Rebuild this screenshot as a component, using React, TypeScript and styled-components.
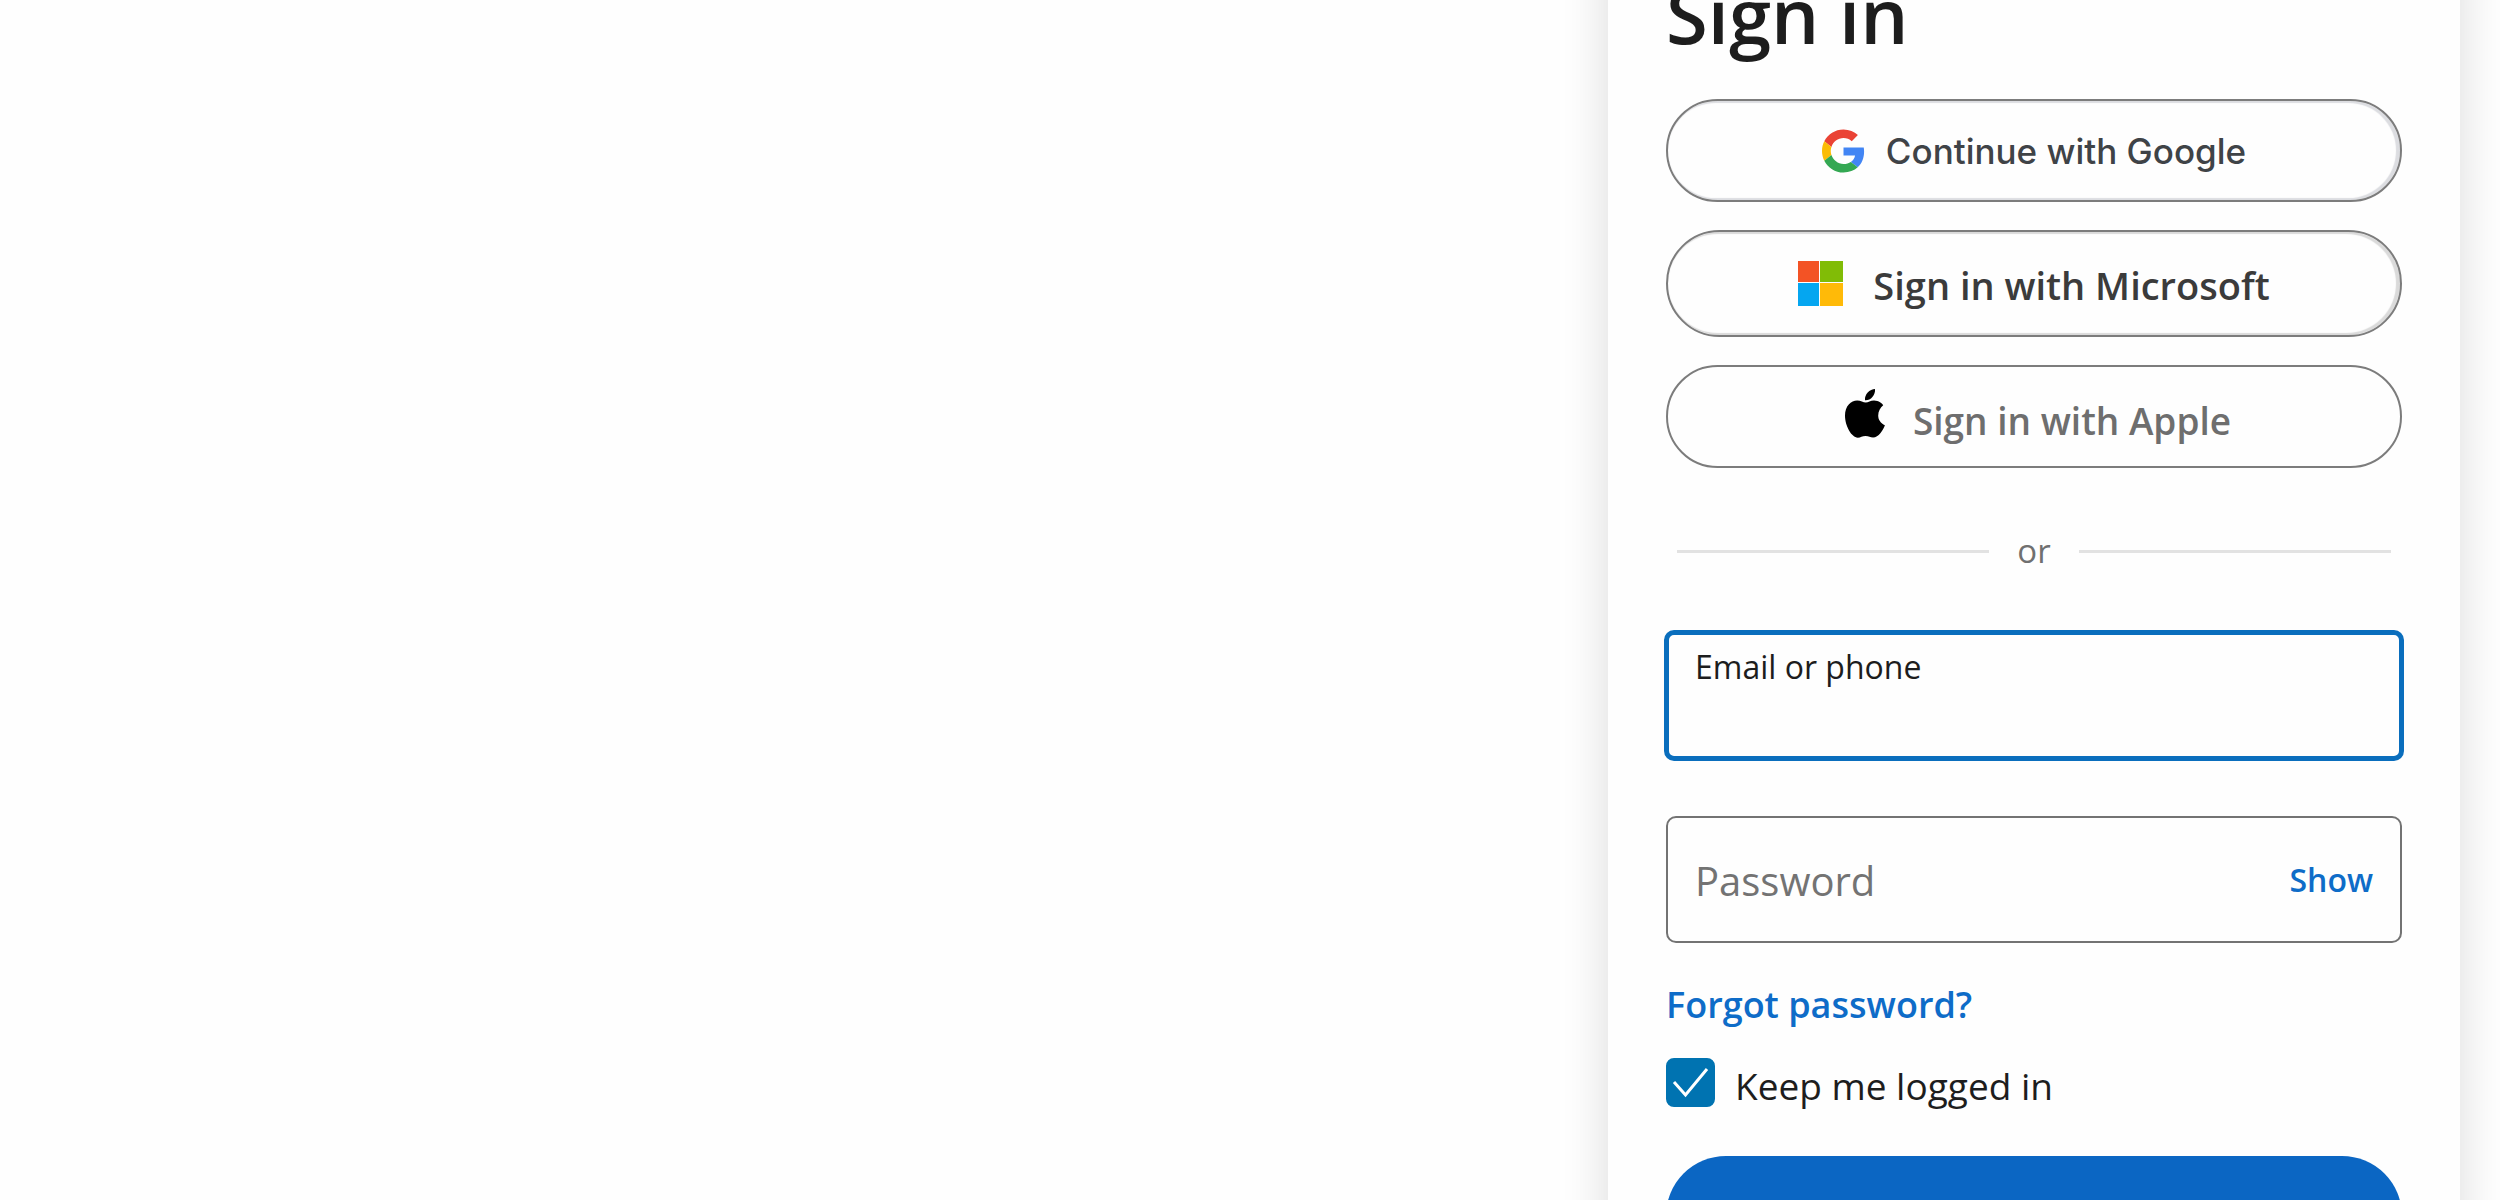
import React, { useState } from "react";
import styled, { createGlobalStyle } from "styled-components";

const GlobalStyle = createGlobalStyle`
  *, *::before, *::after { box-sizing: border-box; }
  body {
    margin: 0;
    background: #fefefe;
    font-family: "Open Sans", "Noto Sans", sans-serif;
    color: #1d1d1d;
  }
  button, input { font: inherit; }
`;

const Page = styled.main`
  display: flex;
  justify-content: flex-end;
  align-items: flex-start;
  height: 100vh;
  padding: 0 40px;
  overflow: hidden;
`;

const Card = styled.section`
  width: 100%;
  max-width: 852px;
  margin-top: -80px;
  padding: 45px 58px 58px;
  background: #fefefe;
  box-shadow: 0 0 44px rgba(0, 0, 0, 0.14);
`;

const Title = styled.h1`
  margin: 0 0 34px;
  font-size: 76px;
  line-height: 100px;
  font-weight: 600;
`;

const ProviderList = styled.div`
  display: flex;
  flex-direction: column;
  gap: 28px;
`;

const Provider = styled.button<{ $gap: number; $tall?: boolean; $inset?: string }>`
  display: flex;
  align-items: center;
  justify-content: center;
  gap: ${(p) => p.$gap}px;
  height: ${(p) => (p.$tall ? 107 : 103)}px;
  padding: 0;
  border: 2px solid #7c7c7c;
  border-radius: 54px;
  background: transparent;
  box-shadow: ${(p) => (p.$inset ? `inset -2px 0 1px 2px ${p.$inset}` : "none")};
  cursor: pointer;

  svg { flex: none; display: block; }
`;

const ProviderLabel = styled.span<{ $color: string; $size: number; $drop: number }>`
  padding-top: ${(p) => p.$drop}px;
  font-size: ${(p) => p.$size}px;
  line-height: 48px;
  font-weight: 600;
  color: ${(p) => p.$color};
`;

const GoogleLabel = styled.span`
  font-family: Inter, Roboto, sans-serif;
  font-size: 35px;
  line-height: 48px;
  font-weight: 500;
  color: #3f4347;
`;

const RaisedIcon = styled.span`
  padding: 0 0 6px 8px;
`;

const Divider = styled.div`
  display: flex;
  align-items: center;
  gap: 28px;
  margin: 59px 11px 55px;
  font-size: 33px;
  line-height: 48px;
  color: #707070;

  &::before, &::after {
    content: "";
    flex: 1;
    height: 3px;
    background: #e2e2e2;
  }
`;

const EmailField = styled.div`
  display: flex;
  flex-direction: column;
  height: 131px;
  margin: 0 -2px 55px;
  padding: 8px 26px;
  border: 5px solid #0a6ebd;
  border-radius: 10px;

  label {
    font-size: 32px;
    line-height: 48px;
  }
`;

const PasswordField = styled.div`
  display: flex;
  align-items: center;
  gap: 12px;
  height: 127px;
  padding: 0 27px;
  border: 2px solid #737373;
  border-radius: 10px;

  label {
    padding-top: 2px;
    font-size: 40px;
    line-height: 60px;
    color: #737373;
  }
`;

const TextInput = styled.input`
  flex: 1;
  min-width: 0;
  padding: 0;
  border: 0;
  outline: 0;
  background: transparent;
  font-size: 36px;
`;

const ShowButton = styled.button`
  padding: 0;
  border: 0;
  background: transparent;
  font-size: 32px;
  line-height: 48px;
  font-weight: 600;
  color: #0e6cc8;
  cursor: pointer;
`;

const ForgotLink = styled.a`
  display: block;
  width: fit-content;
  margin-top: 38px;
  font-size: 36px;
  line-height: 48px;
  font-weight: 600;
  color: #0e6cc8;
  text-decoration: none;
`;

const KeepRow = styled.div`
  display: flex;
  align-items: center;
  gap: 20px;
  margin-top: 29px;

  label {
    padding-top: 7px;
    font-size: 37px;
    line-height: 42px;
  }
`;

const CheckWrap = styled.span`
  position: relative;
  display: block;
  width: 49px;
  height: 49px;

  svg {
    position: absolute;
    inset: 0;
    pointer-events: none;
  }
`;

const CheckInput = styled.input`
  display: block;
  appearance: none;
  width: 49px;
  height: 49px;
  margin: 0;
  border: 2px solid #0073b1;
  border-radius: 8px;
  background: transparent;

  &:checked { background: #0073b1; }
`;

const SubmitButton = styled.button`
  display: block;
  width: 100%;
  height: 120px;
  margin-top: 49px;
  border: 0;
  border-radius: 60px;
  background: #0b66c3;
  font-size: 36px;
  font-weight: 600;
  color: #fff;
`;

function GoogleIcon() {
  return (
    <svg width="43" height="44" viewBox="0 0 48 48" aria-hidden="true">
      <path fill="#EA4335" d="M24 9.5c3.54 0 6.71 1.22 9.21 3.6l6.85-6.85C35.9 2.38 30.47 0 24 0 14.62 0 6.51 5.38 2.56 13.22l7.98 6.19C12.43 13.72 17.74 9.5 24 9.5z" />
      <path fill="#4285F4" d="M46.98 24.55c0-1.57-.15-3.09-.38-4.55H24v9.02h12.94c-.58 2.96-2.26 5.48-4.78 7.18l7.73 6c4.51-4.18 7.09-10.36 7.09-17.65z" />
      <path fill="#FBBC05" d="M10.53 28.59c-.48-1.45-.76-2.99-.76-4.59s.27-3.14.76-4.59l-7.98-6.19C.92 16.46 0 20.12 0 24c0 3.88.92 7.54 2.56 10.78l7.97-6.19z" />
      <path fill="#34A853" d="M24 48c6.48 0 11.93-2.13 15.89-5.81l-7.73-6c-2.15 1.45-4.92 2.3-8.16 2.3-6.26 0-11.57-4.22-13.47-9.91l-7.98 6.19C6.51 42.62 14.62 48 24 48z" />
    </svg>
  );
}

function MicrosoftIcon() {
  return (
    <svg width="45" height="45" viewBox="0 0 45 45" aria-hidden="true">
      <path fill="#F35325" d="M0 0h21v21H0z" />
      <path fill="#81BC06" d="M22 0h23v21H22z" />
      <path fill="#05A6F0" d="M0 22h21v23H0z" />
      <path fill="#FFBA08" d="M22 22h23v23H22z" />
    </svg>
  );
}

function AppleIcon() {
  return (
    <svg width="40" height="49" viewBox="0 0 40 49" aria-hidden="true">
      <path d="M30 0c.4 3-.8 5.800-2.600 7.900-1.900 2.200-4.500 3.500-7.400 3.300-.4-2.900 1-5.900 2.700-7.800C24.600 1.400 27.600.1 30 0z" />
      <path d="M38.200 16.200c-.9-1.500-4.400-4.700-9.200-4.700-3.600 0-5.800 2-8.200 2-2.600 0-5-2-8.600-2C6 11.500 0 17 0 26.600c0 10.500 6.700 22.100 12.800 22.100 2.900 0 4.300-1.700 7.700-1.700 3.500 0 4.600 1.600 7.600 1.600 5.500 0 10-7.700 11.800-12.400-4.100-1.600-6.700-5.200-6.700-9.600 0-4.200 2.100-8 5-10.400z" />
    </svg>
  );
}

export default function App() {
  const [visible, setVisible] = useState(false);

  return (
    <>
      <GlobalStyle />
      <Page>
        <Card>
          <Title>Sign in</Title>
          <ProviderList>
            <Provider type="button" $gap={21} $inset="#dcdde1">
              <GoogleIcon />
              <GoogleLabel>Continue with Google</GoogleLabel>
            </Provider>
            <Provider type="button" $gap={30} $tall $inset="#dadada">
              <MicrosoftIcon />
              <ProviderLabel $color="#3b3b3b" $size={38} $drop={2}>Sign in with Microsoft</ProviderLabel>
            </Provider>
            <Provider type="button" $gap={28}>
              <RaisedIcon>
                <AppleIcon />
              </RaisedIcon>
              <ProviderLabel $color="#6e6e6e" $size={37} $drop={8}>Sign in with Apple</ProviderLabel>
            </Provider>
          </ProviderList>
          <Divider>or</Divider>
          <form onSubmit={(e) => e.preventDefault()}>
            <EmailField>
              <label htmlFor="email">Email or phone</label>
              <TextInput id="email" type="text" autoComplete="username" />
            </EmailField>
            <PasswordField>
              <label htmlFor="password">Password</label>
              <TextInput id="password" type={visible ? "text" : "password"} />
              <ShowButton type="button" onClick={() => setVisible(!visible)}>
                Show
              </ShowButton>
            </PasswordField>
            <ForgotLink href="#forgot">Forgot password?</ForgotLink>
            <KeepRow>
              <CheckWrap>
                <CheckInput id="keep" type="checkbox" defaultChecked />
                <svg width="49" height="49" viewBox="0 0 49 49" aria-hidden="true">
                  <path d="M8 24l11.500 13L41 11" fill="none" stroke="#fff" strokeWidth="3" />
                </svg>
              </CheckWrap>
              <label htmlFor="keep">Keep me logged in</label>
            </KeepRow>
            <SubmitButton type="submit" aria-label="Sign in" />
          </form>
        </Card>
      </Page>
    </>
  );
}
